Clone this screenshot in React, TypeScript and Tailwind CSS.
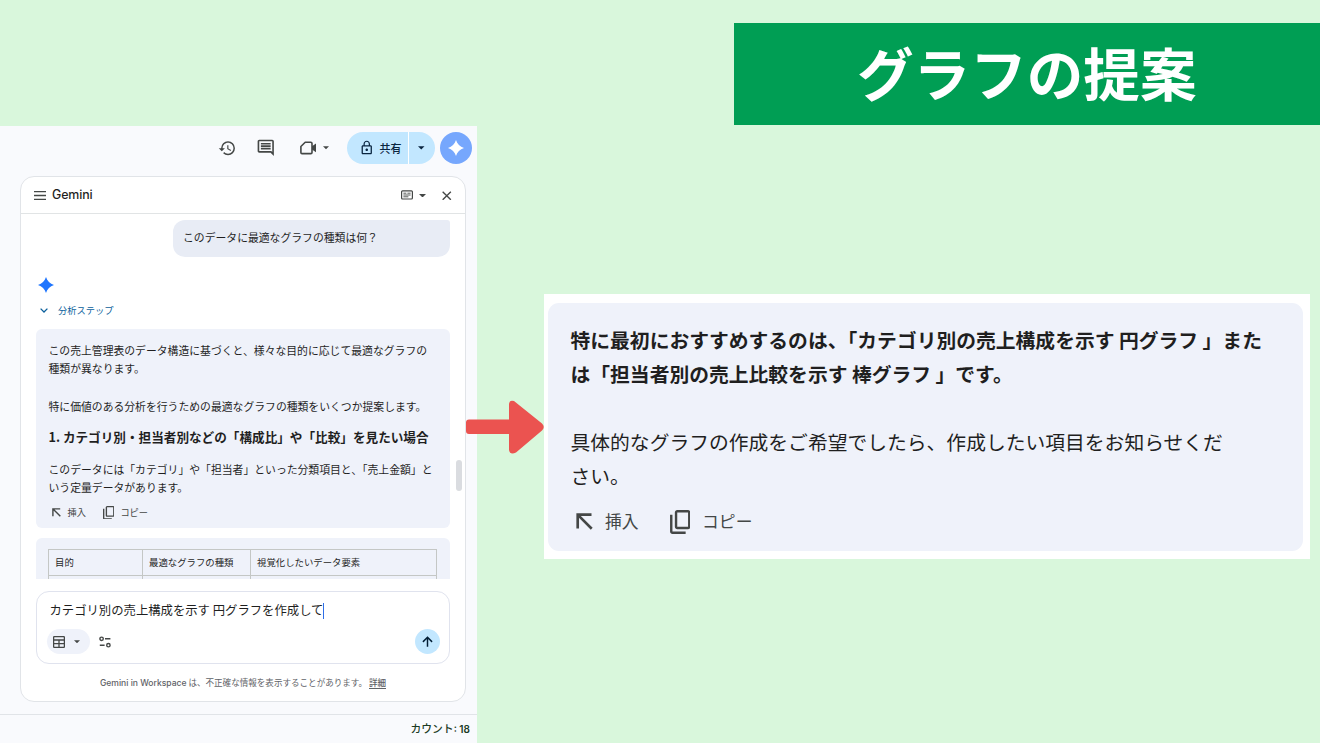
import React from 'react';
import {MdHistory, MdOutlineComment, MdLockOutline} from 'react-icons/md';

const Caret = ({className = 'w-[7px]'}: { className?: string }) => (
    <svg viewBox="0 0 10 5" className={`h-[3.5px] shrink-0 ${className}`} fill="currentColor">
        <path d="M0 0h10L5 5z"/>
    </svg>
);

const Spark = ({className = ''}: { className?: string }) => (
    <svg viewBox="0 0 24 24" className={className} fill="currentColor">
        <path d="M12 0C13.8 6 18 10.200 24 12C18 13.800 13.800 18 12 24C10.200 18 6 13.800 0 12C6 10.200 10.200 6 12 0z"/>
    </svg>
);

const InsertIcon = ({className = ''}: { className?: string }) => (
    <svg viewBox="0 0 16 16" className={className} fill="none" stroke="currentColor" strokeWidth="2.5">
        <path d="M1.6 14.6V1.6h13M1.8 1.8l13 13"/>
    </svg>
);

const CopyIcon = ({className = ''}: { className?: string }) => (
    <svg viewBox="3 2 17 20" className={className} fill="currentColor">
        <path d="M9 18q-.825 0-1.412-.587T7 16V4q0-.825.588-1.412T9 2h9q.825 0 1.413.588T20 4v12q0 .825-.587 1.413T18 18zm0-2h9V4H9zm-4 6q-.825 0-1.412-.587T3 20V6h2v14h11v2z"/>
    </svg>
);

const TopBar = () => (
    <div className="flex items-center h-[44px] pl-[218.5px] text-[#444746]">
        <MdHistory className="w-[18.5px] h-[18.5px] -ml-px"/>
        <MdOutlineComment className="w-[19.5px] h-[19.5px] ml-[19.5px]"/>
        <svg viewBox="0 0 17 14" className="w-[17px] h-[14px] ml-[24.5px]">
            <path d="M5.2 1.2H10.8Q12 1.2 12 2.4V11.4Q12 12.6 10.8 12.6H2Q.9 12.6 .9 11.4V5.5z"
                  fill="none" stroke="currentColor" strokeWidth="1.6" strokeLinejoin="round"/>
            <path d="M12 5.2L16 2.6V11.2L12 8.6z" fill="currentColor"/>
        </svg>
        <Caret className="ml-[6px] w-[6px]"/>
        <div className="flex items-center w-[88px] h-[31.5px] ml-[18px] rounded-full bg-[#c2e7ff] text-[#0a2540]">
            <div className="flex items-center w-[62px] h-full pl-[12px] border-r border-white">
                <MdLockOutline className="w-[15.5px] h-[15.5px]"/>
                <span className="ml-[5.5px] text-[11px] font-medium">共有</span>
            </div>
            <Caret className="ml-[9.5px] w-[6.5px]"/>
        </div>
        <div className="flex items-center justify-center w-[31.5px] h-[31.5px] ml-[5.5px] rounded-full bg-[#76a7fd]">
            <Spark className="w-[16px] h-[16px] text-white"/>
        </div>
    </div>
);

const PanelHeader = () => (
    <div className="flex items-center h-[37.5px] pt-[1px] pl-[12.5px] border-b border-[#e1e4e5] text-[#444746]">
        <svg viewBox="0 0 12 9" className="w-[12px] h-[9px]" stroke="currentColor" strokeWidth="1.3">
            <path d="M0 .7h12M0 4.5h12M0 8.3h12"/>
        </svg>
        <span
            className="w-[344px] ml-[6.5px] font-['Inter'] text-[12.4px] font-medium tracking-[-0.1px] text-[#1f1f1f]">Gemini</span>
        <svg viewBox="0 0 12 10" className="w-[12px] h-[10px] ml-[5px]" fill="none" stroke="currentColor">
            <rect x=".6" y=".8" width="10.8" height="8.2" rx="1" strokeWidth="1.2"/>
            <path d="M2.4 3.2h3M6.4 3.2h3.2M2.4 5h7.2M2.4 6.8h5" strokeWidth=".9"/>
        </svg>
        <Caret className="ml-[6px] w-[7px]"/>
        <svg viewBox="0 0 10 10" className="w-[9.5px] h-[9.5px] ml-[16px]" stroke="currentColor" strokeWidth="1.4">
            <path d="M.7 .7l8.6 8.6M9.3 .7L.7 9.3"/>
        </svg>
    </div>
);

const AnswerCard = () => (
    <div
        className="h-[199px] mt-[9px] pt-[11.5px] pl-[12.5px] rounded-[6px] bg-[#eff2fa] text-[10.84px] leading-[18.7px] text-[#1f1f1f] whitespace-nowrap">
        <p>この売上管理表のデータ構造に基づくと、様々な目的に応じて最適なグラフの</p>
        <p>種類が異なります。</p>
        <p className="mt-[18.7px]">特に価値のある分析を行うための最適なグラフの種類をいくつか提案します。</p>
        <h3 className="mt-[12.5px] text-[12.62px] font-bold">
            1. カテゴリ別・担当者別などの「構成比」や「比較」を見たい場合
        </h3>
        <p className="mt-[13px]">このデータには「カテゴリ」や「担当者」といった分類項目と、「売上金額」と</p>
        <p>いう定量データがあります。</p>
        <div className="flex items-center h-[14px] mt-[8.5px] pl-[3px] text-[9.2px] text-[#444746]">
            <InsertIcon className="w-[9px] h-[9px]"/>
            <span className="ml-[7px]">挿入</span>
            <CopyIcon className="w-[11.5px] h-[13.5px] ml-[17px]"/>
            <span className="ml-[6px]">コピー</span>
        </div>
    </div>
);

const TableCard = () => (
    <div
        className="h-[41px] mt-[9.5px] pt-[11.5px] px-[12px] rounded-t-[6px] bg-[#eff2fa] overflow-hidden text-[9.38px] text-[#1f1f1f]">
        <div className="grid grid-cols-[94px_108px_186px] grid-rows-[26px_14px] w-[389px] border-l border-t border-[#c4c7c5]">
            {['目的', '最適なグラフの種類', '視覚化したいデータ要素'].map((label) => (
                <div key={label} className="pl-[6px] leading-[25px] border-r border-b border-[#c4c7c5]">
                    {label}
                </div>
            ))}
            <div className="border-r border-[#c4c7c5]"/>
            <div className="border-r border-[#c4c7c5]"/>
            <div className="border-r border-[#c4c7c5]"/>
        </div>
    </div>
);

const PromptBox = () => (
    <div className="h-[73px] mt-[12.5px] pt-[10px] px-[9.5px] rounded-[13px] border border-[#e0e3ee]">
        <div className="flex items-center h-[17px] pl-[3px] text-[12.35px] text-[#1f1f1f] whitespace-nowrap">
            カテゴリ別の売上構成を示す 円グラフを作成して
            <span className="w-px h-[16px] bg-[#2f6fe8]"/>
        </div>
        <div className="flex items-center justify-between h-[25px] mt-[10px] text-[#444746]">
            <div className="flex items-center">
                <div className="flex items-center w-[43px] h-[24.5px] pl-[6px] rounded-full bg-[#eff2fa]">
                    <svg viewBox="0 0 12 12" className="w-[12px] h-[12px]" fill="none" stroke="currentColor"
                         strokeWidth="1.3">
                        <rect x=".6" y=".6" width="10.8" height="10.8" rx="1"/>
                        <path d="M.6 4h10.8M.6 7.7h10.8M6 4v7.4"/>
                    </svg>
                    <Caret className="ml-[9px] w-[6px]"/>
                </div>
                <svg viewBox="0 0 12 12" className="w-[12px] h-[12px] ml-[9.5px]" fill="none" stroke="currentColor"
                     strokeWidth="1.4">
                    <circle cx="2.6" cy="2.8" r="1.7"/>
                    <path d="M6 2.8h5.4M.8 9.2h4.8"/>
                    <circle cx="9.4" cy="9.2" r="1.7"/>
                </svg>
            </div>
            <div className="flex items-center justify-center w-[25px] h-[25px] rounded-full bg-[#c2e7ff] text-[#001d35]">
                <svg viewBox="0 0 12 12" className="w-[11px] h-[11px]" fill="none" stroke="currentColor"
                     strokeWidth="1.6">
                    <path d="M6 11.6V1.4M1 6.4L6 1.4L11 6.4"/>
                </svg>
            </div>
        </div>
    </div>
);

const GeminiPanel = () => (
    <div
        className="relative w-[446px] h-[526px] ml-[20px] mt-[5.5px] rounded-[14px] border border-[#e1e4e8] bg-white">
        <PanelHeader/>
        <div className="pl-[15px] pr-[15px]">
            <div
                className="w-[277px] h-[37px] mt-[6px] ml-auto pl-[10px] rounded-[12px] rounded-tr-[3px] bg-[#e8ecf5] text-[10.83px] leading-[35px] text-[#1f1f1f]">
                このデータに最適なグラフの種類は何？
            </div>
            <Spark className="w-[16px] h-[16px] mt-[20px] ml-[1.5px] text-[#1f75fe]"/>
            <div className="flex items-center h-[14px] mt-[10.5px] pl-[4px] text-[9.25px] text-[#0b5f9c]">
                <svg viewBox="0 0 8 5" className="w-[8px] h-[5px]" fill="none" stroke="currentColor"
                     strokeWidth="1.3">
                    <path d="M.6 .6L4 4L7.4 .6"/>
                </svg>
                <span className="ml-[10px]">分析ステップ</span>
            </div>
            <div className="h-[2.5px]"/>
            <AnswerCard/>
            <TableCard/>
            <PromptBox/>
            <p className="mt-[11.5px] text-center text-[8.55px] leading-[13px] text-[#5f6368] whitespace-nowrap">
                <span className="font-['Inter'] font-medium">Gemini in Workspace</span>
                {' は、不正確な情報を表示することがあります。 '}
                <span className="font-medium border-b border-[#5f6368]">詳細</span>
            </p>
        </div>
        <div className="absolute right-[3px] top-[283.5px] w-[6px] h-[31px] rounded-full bg-[#dadce0]"/>
    </div>
);

const ResultCard = () => (
    <div className="w-[766px] h-[265px] ml-[67px] mt-[169px] pt-[9px] pl-[4px] bg-white">
        <div
            className="w-[755px] h-[248px] pt-[20px] pl-[22.5px] rounded-[11px] bg-[#eff2fa] text-[19.8px] leading-[34px] text-[#1f1f1f] whitespace-nowrap">
            <p className="font-bold">特に最初におすすめするのは、「カテゴリ別の売上構成を示す 円グラフ 」また</p>
            <p className="font-bold">は「担当者別の売上比較を示す 棒グラフ 」です。</p>
            <p className="mt-[34px]">具体的なグラフの作成をご希望でしたら、作成したい項目をお知らせくだ</p>
            <p>さい。</p>
            <div className="flex items-center h-[26px] mt-[15.5px] pl-[5.5px] text-[16.8px] text-[#444746]">
                <InsertIcon className="w-[17px] h-[17px]"/>
                <span className="ml-[12px] -mt-px">挿入</span>
                <CopyIcon className="w-[20.5px] h-[24px] ml-[31px]"/>
                <span className="ml-[12px] -mt-px">コピー</span>
            </div>
        </div>
    </div>
);

const App = () => {
    return (
        <main
            className="relative flex w-[1320px] h-[743px] overflow-hidden bg-[#d9f7dc] font-['Noto_Sans_CJK_JP',sans-serif]">

            {/* Spreadsheet side panel */}
            <section className="w-[477px] h-[616.5px] mt-[126px] shrink-0 bg-[#f9fafd]">
                <TopBar/>
                <GeminiPanel/>
                <div
                    className="h-[28px] mt-[12.5px] pr-[7px] border-t border-[#e1e4e8] text-right text-[10.8px] leading-[26px] font-medium text-[#1b3a24]">
                    カウント<span className="font-['Inter'] font-semibold text-[10px]">: 18</span>
                </div>
            </section>

            {/* Title and enlarged answer */}
            <section className="flex-1">
                <h1 className="w-[586.5px] h-[102px] mt-[23px] ml-auto bg-[#009e54] text-center text-[56.6px] leading-[96px] font-bold text-white">
                    グラフの提案
                </h1>
                <ResultCard/>
            </section>

            {/* Arrow laid over both columns */}
            <svg viewBox="0 0 78 54" className="absolute left-[466px] top-[400px] w-[78px] h-[54px]" fill="#eb5350">
                <path d="M3 19.5H43V4Q43.5 -.5 48 1L76 23.5Q79.5 27 76 30.5L50 52.5Q44 55.500 43 50V34H3Q0 34 0 31V22.500Q0 19.500 3 19.500z"/>
            </svg>
        </main>
    );
};

export default App;
